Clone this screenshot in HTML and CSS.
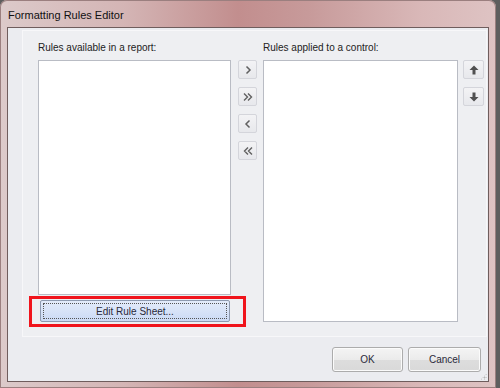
FILE: index.html
```html
<!DOCTYPE html>
<html lang="en">
<head>
    <meta charset="UTF-8">
    <title>Formatting Rules Editor</title>
    <link rel="stylesheet" href="styles.css">
</head>
<body>
    <div class="window">
        <div class="title-bar">Formatting Rules Editor</div>

        <div class="client">
            <!-- Main layout group -->
            <div class="panel">
                <div class="editor-grid">
                    <span class="label label-left">Rules available in a report:</span>
                    <span class="label label-right">Rules applied to a control:</span>

                    <div class="left-column">
                        <div class="listbox list-available"></div>
                        <button class="edit-sheet"><span class="focus-rect">Edit Rule Sheet...</span></button>
                        <div class="highlight"></div>
                    </div>

                    <div class="move-buttons">
                        <button class="tool-btn">
                            <svg width="10" height="10" viewBox="0 0 10 10"><path d="M3.5 1.5 L7 5 L3.5 8.5" fill="none" stroke="#606060" stroke-width="1.5"/></svg>
                        </button>
                        <button class="tool-btn">
                            <svg width="12" height="10" viewBox="0 0 12 10"><path d="M2 1.5 L5.5 5 L2 8.5 M6 1.5 L9.5 5 L6 8.5" fill="none" stroke="#606060" stroke-width="1.4"/></svg>
                        </button>
                        <button class="tool-btn">
                            <svg width="10" height="10" viewBox="0 0 10 10"><path d="M6.5 1.5 L3 5 L6.5 8.5" fill="none" stroke="#606060" stroke-width="1.5"/></svg>
                        </button>
                        <button class="tool-btn">
                            <svg width="12" height="10" viewBox="0 0 12 10"><path d="M6 1.5 L2.5 5 L6 8.5 M10 1.5 L6.5 5 L10 8.5" fill="none" stroke="#606060" stroke-width="1.4"/></svg>
                        </button>
                    </div>

                    <div class="listbox list-applied"></div>

                    <div class="order-buttons">
                        <button class="tool-btn wide">
                            <svg width="10" height="10" viewBox="0 0 10 10"><path d="M5 0.5 L9.5 5 L6.5 5 L6.5 9.5 L3.5 9.5 L3.5 5 L0.5 5 Z" fill="#505050"/></svg>
                        </button>
                        <button class="tool-btn wide">
                            <svg width="10" height="10" viewBox="0 0 10 10"><path d="M5 9.5 L9.5 5 L6.5 5 L6.5 0.5 L3.5 0.5 L3.5 5 L0.5 5 Z" fill="#505050"/></svg>
                        </button>
                    </div>
                </div>
            </div>

            <div class="dialog-buttons">
                <button class="dlg-btn ok">OK</button>
                <button class="dlg-btn cancel">Cancel</button>
            </div>
            <div class="size-grip"></div>
        </div>
    </div>
</body>
</html>
```

FILE: styles.css
```css
body {
    margin: 0;
    background-color: #5e5e5e;
    font-family: 'Liberation Sans', Arial, sans-serif;
    font-size: 10px;
    color: #1e1e1e;
    width: 500px;
    height: 388px;
    overflow: hidden;
}

.window {
    width: 496px;
    height: 388px;
    box-sizing: border-box;
    padding: 0 7px 6px 7px;
    border-radius: 7px 7px 0 0;
    background: linear-gradient(90deg, #dccaca 0%, #d4b5b5 25%, #c28e8e 48%, #c79a9a 62%, #d9b8b8 85%, #dec3c3 100%);
    display: flex;
    flex-direction: column;
    box-shadow: inset 0 0 0 1px #9b7f7f;
}

.title-bar {
    height: 27px;
    flex-shrink: 0;
    display: flex;
    align-items: center;
    padding-left: 1px;
    padding-top: 2px;
    box-sizing: border-box;
    font-size: 11px;
    color: #111;
}

.client {
    flex: 1;
    position: relative;
    background-color: #ebecf0;
    border: 1px solid #6f5d5d;
    box-sizing: border-box;
    display: flex;
    flex-direction: column;
}

.panel {
    margin: 2px 1px 0 14px;
    height: 307px;
    flex-shrink: 0;
    box-sizing: border-box;
    border: 1px solid #f7f7f9;
    background-color: #eeeff2;
    padding: 10px 0 0 15px;
}

.editor-grid {
    display: grid;
    grid-template-columns: 193px 19px 194px 21px;
    grid-template-rows: 14px 262px;
    column-gap: 7px;
    row-gap: 5px;
}

.label {
    line-height: 14px;
    white-space: nowrap;
    color: #222;
}

.label-left {
    grid-row: 1;
    grid-column: 1 / 3;
}

.label-right {
    grid-row: 1;
    grid-column: 3;
    margin-left: -1px;
}

.left-column {
    grid-row: 2;
    grid-column: 1;
    position: relative;
    display: flex;
    flex-direction: column;
    gap: 5px;
}

.move-buttons {
    grid-row: 2;
    grid-column: 2;
}

.list-applied {
    grid-row: 2;
    grid-column: 3;
    margin-left: -1px;
}

.order-buttons {
    grid-row: 2;
    grid-column: 4;
    margin-left: -2px;
}

.listbox {
    background-color: #fff;
    border: 1px solid #b9bcc4;
    box-sizing: border-box;
}

.list-available {
    height: 235px;
}

.edit-sheet {
    height: 22px;
    margin: 0 1px 0 2px;
    padding: 2px;
    border: 1px solid #8e9ab0;
    border-radius: 2px;
    background: linear-gradient(#e3ebfa, #cbdaf5);
    font-family: inherit;
    font-size: 10px;
    color: #2a2a3a;
}

.focus-rect {
    display: flex;
    align-items: center;
    justify-content: center;
    height: 100%;
    box-sizing: border-box;
    border: 1px dotted #555;
}

/* red annotation frame drawn over the button */
.highlight {
    position: absolute;
    left: -9px;
    top: 236px;
    width: 217px;
    height: 31px;
    box-sizing: border-box;
    border: 3px solid #f0141c;
}

.move-buttons,
.order-buttons {
    display: flex;
    flex-direction: column;
    gap: 8px;
}

.tool-btn {
    width: 19px;
    height: 19px;
    padding: 0;
    display: flex;
    align-items: center;
    justify-content: center;
    border: 1px solid #d4d5db;
    border-radius: 2px;
    background: linear-gradient(#f3f3f5, #e7e8ec);
}

.tool-btn.wide {
    width: 21px;
}

.dialog-buttons {
    display: flex;
    justify-content: flex-end;
    gap: 5px;
    padding: 10px 7px 0 0;
}

.dlg-btn {
    height: 25px;
    border: 1px solid #acacac;
    border-radius: 3px;
    background: linear-gradient(#f4f4f4 0%, #ebebeb 50%, #dddddd 51%, #d9d9d9 100%);
    font-family: inherit;
    font-size: 10px;
    color: #2a2a3a;
    box-shadow: inset 0 0 0 1px #fbfbfb;
}

.ok {
    width: 71px;
}

.cancel {
    width: 73px;
}

.size-grip {
    position: absolute;
    right: 1px;
    bottom: 1px;
    width: 7px;
    height: 7px;
    background: radial-gradient(circle, #b5b5b5 0.8px, transparent 1.2px) 0 0 / 3px 3px;
    clip-path: polygon(100% 0, 100% 100%, 0 100%);
}
```
